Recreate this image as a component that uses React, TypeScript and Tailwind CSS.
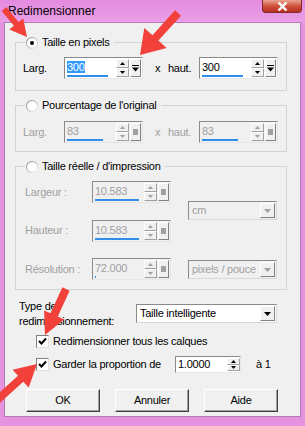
import React from "react";

type Pt = [number, number];

// arrow polygon from tail to tip
function arrowPoints(t: Pt, p: Pt, L: number, W: number, s: number) {
    const dx = p[0] - t[0];
    const dy = p[1] - t[1];
    const len = Math.hypot(dx, dy);
    const ux = dx / len;
    const uy = dy / len;
    const nx = -uy;
    const ny = ux;
    const b: Pt = [p[0] - ux * L, p[1] - uy * L];
    const pts: Pt[] = [
        [t[0] + nx * s, t[1] + ny * s],
        [b[0] + nx * s, b[1] + ny * s],
        [b[0] + nx * W, b[1] + ny * W],
        p,
        [b[0] - nx * W, b[1] - ny * W],
        [b[0] - nx * s, b[1] - ny * s],
        [t[0] - nx * s, t[1] - ny * s],
    ];
    return pts.map((q) => `${q[0].toFixed(1)},${q[1].toFixed(1)}`).join(" ");
}

const Tri = ({ up, color }: { up?: boolean; color: string }) => (
    <svg width="5" height="3" viewBox="0 0 5 3">
        <polygon points={up ? "2.5,0 5,3 0,3" : "0,0 5,0 2.5,3"} fill={color} />
    </svg>
);

const SpinBtn = ({ up, disabled }: { up?: boolean; disabled?: boolean }) => (
    <div className="flex-1 flex items-center justify-center bg-[#f0f0f0] border border-t-white border-l-white border-r-[#a0a0a0] border-b-[#a0a0a0]">
        <Tri up={up} color={disabled ? "#a0a0a0" : "#000"} />
    </div>
);

const Spin = ({ disabled }: { disabled?: boolean }) => (
    <div className="flex flex-col w-[13px] py-[1px]">
        <SpinBtn up disabled={disabled} />
        <SpinBtn disabled={disabled} />
    </div>
);

const ExtraBtn = ({ disabled }: { disabled?: boolean }) => (
    <div className="w-[11px] my-[1px] mr-[1px] ml-[1px] flex items-center justify-center bg-[#f0f0f0] border border-t-white border-l-white border-r-[#808080] border-b-[#808080]">
        {disabled ? (
            <div className="w-[5px] h-[6px] bg-[#a0a0a0]" />
        ) : (
            <svg width="7" height="7" viewBox="0 0 7 7">
                <rect x="0" y="0" width="7" height="1" fill="#000" />
                <polygon points="0,2.5 7,2.5 3.5,6.5" fill="#000" />
            </svg>
        )}
    </div>
);

const NumInput = ({
    value,
    w,
    selected,
    disabled,
    line,
    extra = true,
}: {
    value: string;
    w: string;
    selected?: boolean;
    disabled?: boolean;
    line?: string;
    extra?: boolean;
}) => (
    <div
        className={`flex h-[22px] ${w} border border-t-[#8a8a8a] border-l-[#8a8a8a] border-r-[#e6e6e6] border-b-[#e6e6e6]`}
    >
        <div
            className={`flex-1 flex flex-col pl-[2px] pt-[3px] ${disabled ? "bg-[#f0f0f0] text-[#a0a0a0]" : "bg-white text-black"}`}
        >
            <span className="leading-[13px] self-start">
                <span className={selected ? "bg-[#3399ff] text-white" : ""}>
                    {value}
                </span>
            </span>
            {line && <div className={`mt-auto mb-[1px] h-[2px] bg-[#2f8ee8] ${line}`} />}
        </div>
        <div className={`flex ${disabled ? "bg-[#f0f0f0]" : "bg-white"}`}>
            <Spin disabled={disabled} />
            {extra && <ExtraBtn disabled={disabled} />}
        </div>
    </div>
);

const Select = ({
    value,
    w,
    disabled,
}: {
    value: string;
    w: string;
    disabled?: boolean;
}) => (
    <div
        className={`flex h-[19px] ${w} border border-t-[#8a8a8a] border-l-[#8a8a8a] border-r-[#d8d8d8] border-b-[#d8d8d8] ${disabled ? "bg-[#f0f0f0] text-[#a0a0a0]" : "bg-white text-black"}`}
    >
        <span className="flex-1 pl-[3px] leading-[17px] overflow-hidden whitespace-nowrap">
            {value}
        </span>
        <div className="w-[15px] m-[1px] flex items-center justify-center bg-[#f0f0f0] border border-t-white border-l-white border-r-[#808080] border-b-[#808080]">
            <svg width="7" height="4" viewBox="0 0 7 4">
                <polygon points="0,0 7,0 3.5,4" fill={disabled ? "#a0a0a0" : "#000"} />
            </svg>
        </div>
    </div>
);

const Radio = ({ checked }: { checked?: boolean }) => (
    <div className="w-[12px] h-[12px] rounded-full bg-gradient-to-br from-[#808080] to-white p-[1px]">
        <div className="w-full h-full rounded-full bg-white flex items-center justify-center">
            {checked && <div className="w-[4px] h-[4px] rounded-full bg-black" />}
        </div>
    </div>
);

const Check = () => (
    <div className="w-[13px] h-[13px] bg-white border border-t-[#808080] border-l-[#808080] border-r-[#e0e0e0] border-b-[#e0e0e0] flex items-center justify-center">
        <svg width="9" height="9" viewBox="0 0 9 9">
            <polyline points="1,4 3.5,6.5 8,1.5" fill="none" stroke="#000" strokeWidth="2" />
        </svg>
    </div>
);

const Group = ({
    title,
    checked,
    children,
    className = "",
}: {
    title: string;
    checked?: boolean;
    children: React.ReactNode;
    className?: string;
}) => (
    <fieldset
        className={`w-[272px] border border-[#cfd4d8] pl-[7px] ${className}`}
    >
        <legend className="ml-[2px] pl-[1px] pr-[4px]">
            <div className="flex items-center gap-[4px] h-[13px]">
                <Radio checked={checked} />
                <span className="leading-[13px]">{title}</span>
            </div>
        </legend>
        {children}
    </fieldset>
);

const Btn = ({ label }: { label: string }) => (
    <div className="w-[74px] h-[23px] flex items-center justify-center bg-[#f0f0f0] border border-t-white border-l-white border-r-[#404040] border-b-[#404040] shadow-[inset_-1px_-1px_0_#a0a0a0]">
        {label}
    </div>
);

export default function App() {
    return (
        <div className="relative w-[305px] h-[426px] overflow-hidden bg-[#e593e1] font-['Liberation_Sans',Arial,sans-serif] text-[11px] leading-[13px] tracking-[-0.25px] text-black">
            {/* title bar */}
            <div className="flex h-[22px] bg-gradient-to-b from-[#e48be0] to-[#ea9fe7]">
                <span className="pl-[8px] pt-[4px] text-[12px] leading-[14px] tracking-normal text-black">
                    Redimensionner
                </span>
                <div className="ml-auto mr-[3px] w-[40px] h-[13px] rounded-b-[4px] border border-t-0 border-[#7d2e2b] bg-gradient-to-b from-[#e9a393] via-[#d0513d] to-[#b8301f] flex items-center justify-center">
                    <svg width="11" height="9" viewBox="0 0 11 9">
                        <path d="M1.5 0.5 L9.5 8.5 M9.5 0.5 L1.5 8.5" stroke="#fff" strokeWidth="2.4" />
                    </svg>
                </div>
            </div>

            {/* client area */}
            <div className="ml-[4px] w-[297px] h-[395px] bg-[#f0f0f0] border border-[#b27cb0] pl-[10px] pt-[13px]">
                <Group title="Taille en pixels" checked className="pb-[11px]">
                    <div className="flex items-center pt-[8px]">
                        <span className="w-[41px]">Larg.</span>
                        <NumInput value="300" w="w-[79px]" selected line="w-[41px]" />
                        <span className="ml-[12px] w-[13px]">x</span>
                        <span className="w-[31px]">haut.</span>
                        <NumInput value="300" w="w-[79px]" line="w-[41px]" />
                    </div>
                </Group>

                <Group title="Pourcentage de l'original" className="mt-[8px] pb-[8px]">
                    <div className="flex items-center pt-[9px] text-[#a0a0a0]">
                        <span className="w-[41px]">Larg.</span>
                        <NumInput value="83" w="w-[79px]" disabled line="w-[36px]" />
                        <span className="ml-[12px] w-[13px]">x</span>
                        <span className="w-[31px]">haut.</span>
                        <NumInput value="83" w="w-[79px]" disabled line="w-[36px]" />
                    </div>
                </Group>

                <Group title="Taille réelle / d'impression" className="mt-[8px] pb-[9px]">
                    <div className="flex pt-[8px] text-[#a0a0a0]">
                        <div className="flex flex-col gap-[16.5px]">
                            <div className="flex items-center">
                                <span className="w-[69px] pl-[2px]">Largeur :</span>
                                <NumInput value="10.583" w="w-[79px]" disabled line="w-[44px]" />
                            </div>
                            <div className="flex items-center">
                                <span className="w-[69px] pl-[2px]">Hauteur :</span>
                                <NumInput value="10.583" w="w-[79px]" disabled line="w-[44px]" />
                            </div>
                            <div className="flex items-center">
                                <span className="w-[69px] pl-[2px]">Résolution :</span>
                                <NumInput value="72.000" w="w-[79px]" disabled line="w-[1px]" />
                            </div>
                        </div>
                        <div className="ml-[17px] flex flex-col">
                            <div className="mt-[20px]">
                                <Select value="cm" w="w-[89px]" disabled />
                            </div>
                            <div className="mt-[40px]">
                                <Select value="pixels / pouce" w="w-[89px]" disabled />
                            </div>
                        </div>
                    </div>
                </Group>

                {/* type de redimensionnement */}
                <div className="flex items-start mt-[9px]">
                    <div className="ml-[4px] w-[117px] leading-[15px]">
                        <div>Type de</div>
                        <div>redimensionnement:</div>
                    </div>
                    <div className="mt-[5px]">
                        <Select value="Taille intelligente" w="w-[141px]" />
                    </div>
                </div>

                <div className="flex items-center h-[17px] mt-[4px] ml-[21px] gap-[4px]">
                    <Check />
                    <span>Redimensionner tous les calques</span>
                </div>

                <div className="flex items-center mt-[6px] ml-[21px]">
                    <Check />
                    <span className="ml-[4px] w-[122px]">Garder la proportion de</span>
                    <div className="flex h-[17px] w-[66px] bg-white border border-t-[#8a8a8a] border-l-[#8a8a8a] border-r-[#e6e6e6] border-b-[#e6e6e6]">
                        <span className="flex-1 pl-[2px] leading-[15px]">1.0000</span>
                        <Spin />
                    </div>
                    <span className="ml-[15px]">à 1</span>
                </div>

                <div className="flex gap-[15px] ml-[11px] mt-[16px]">
                    <Btn label="OK" />
                    <Btn label="Annuler" />
                    <Btn label="Aide" />
                </div>
            </div>

            {/* red annotation arrows */}
            <svg className="absolute inset-0 pointer-events-none" width="305" height="426">
                <polygon points={arrowPoints([4, 9], [27, 37], 17, 9, 3)} fill="#f2403a" />
                <polygon points={arrowPoints([178, 13], [140, 55], 23, 15, 4)} fill="#f2403a" />
                <polygon points={arrowPoints([66, 289], [45, 335], 22, 11, 4)} fill="#f2403a" />
                <polygon points={arrowPoints([-4, 401], [37, 364], 22, 12, 4)} fill="#f2403a" />
            </svg>
        </div>
    );
}
